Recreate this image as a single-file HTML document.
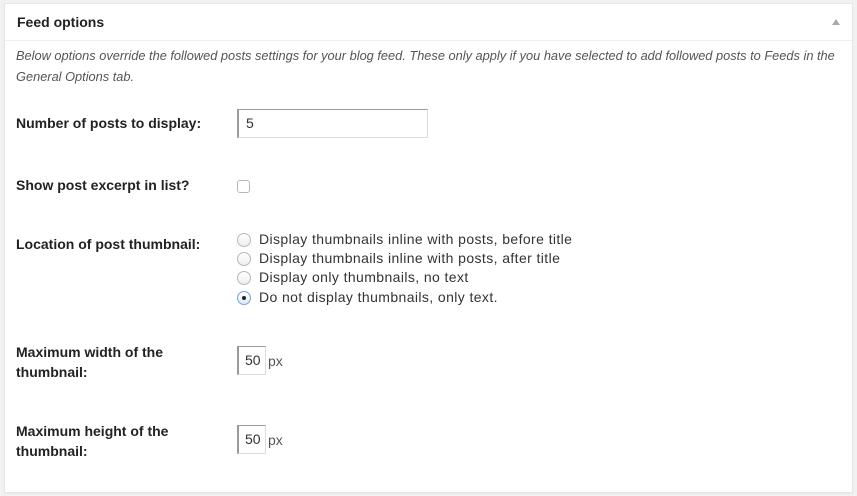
<!DOCTYPE html>
<html><head><style>
body{margin:0;width:857px;height:496px;background:#f1f1f1;font-family:"Liberation Sans",sans-serif;color:#222;position:relative;overflow:hidden}
.box{position:absolute;left:4px;top:3px;width:847px;height:488px;background:#fff;border:1px solid #e5e5e5;box-shadow:0 1px 1px rgba(0,0,0,.04)}
.hd{position:absolute;left:0;top:0;right:0;height:36px;border-bottom:1px solid #eee}
.a{position:absolute;font-size:14px;white-space:nowrap}
.b{font-weight:bold;color:#222}
.desc{font-style:italic;font-size:12.8px;color:#555;line-height:21px;left:16px;top:45px;white-space:nowrap;position:absolute}
.inp{position:absolute;background:#fff;border:1px solid #ddd;border-top-color:#999;border-left:2px solid #999;box-sizing:border-box;font-size:14px;padding:0 0 0 7px;line-height:26px;color:#333}
.rad{position:absolute;left:237px;width:14px;height:14px;border-radius:50%;border:1px solid #b4b9be;box-sizing:border-box;background:linear-gradient(#fff,#eee)}
.rt{position:absolute;left:259px;font-size:14px;color:#333;letter-spacing:0.4px}
</style></head><body>
<div class="box"><div class="hd"></div>
<div class="a b" style="left:12px;top:10px">Feed options</div>
<div style="position:absolute;right:12px;top:15px;width:0;height:0;border-left:4px solid transparent;border-right:4px solid transparent;border-bottom:6px solid #aaa"></div>
</div>
<div class="desc">Below options override the followed posts settings for your blog feed. These only apply if you have selected to add followed posts to Feeds in the<br>General Options tab.</div>
<div class="a b" style="left:16px;top:115px">Number of posts to display:</div>
<div class="inp" style="left:237px;top:109px;width:191px;height:29px">5</div>
<div class="a b" style="left:16px;top:177px">Show post excerpt in list?</div>
<div style="position:absolute;left:237px;top:180px;width:13px;height:13px;border:1px solid #b4b9be;border-radius:3px;box-sizing:border-box;background:#fff"></div>
<div class="a b" style="left:16px;top:236px">Location of post thumbnail:</div>
<div class="rad" style="top:233px"></div><div class="rt" style="top:231px">Display thumbnails inline with posts, before title</div>
<div class="rad" style="top:252px"></div><div class="rt" style="top:250px">Display thumbnails inline with posts, after title</div>
<div class="rad" style="top:271px"></div><div class="rt" style="top:269px">Display only thumbnails, no text</div>
<div class="rad" style="top:291px;border-color:#7aa4d5;background:linear-gradient(#fff,#dde9f8)"><div style="position:absolute;left:4px;top:4px;width:4px;height:4px;border-radius:50%;background:#222"></div></div><div class="rt" style="top:289px">Do not display thumbnails, only text.</div>
<div class="a b" style="left:16px;top:342px;line-height:20px">Maximum width of the<br>thumbnail:</div>
<div class="inp" style="left:237px;top:346px;width:29px;height:29px;padding-left:6px">50</div>
<div class="a" style="left:268px;top:353px;color:#555">px</div>
<div class="a b" style="left:16px;top:421px;line-height:20px">Maximum height of the<br>thumbnail:</div>
<div class="inp" style="left:237px;top:425px;width:29px;height:29px;padding-left:6px">50</div>
<div class="a" style="left:268px;top:432px;color:#555">px</div>
</body></html>
